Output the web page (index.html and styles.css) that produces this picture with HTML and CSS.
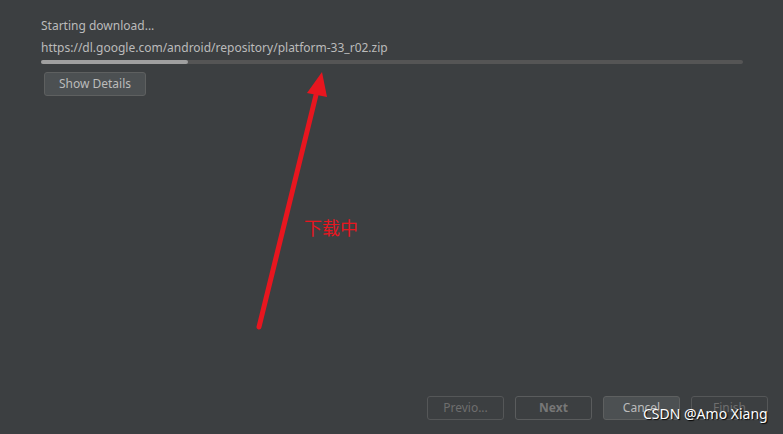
FILE: index.html
```html
<!DOCTYPE html>
<html>
<head>
<meta charset="utf-8">
<link rel="stylesheet" href="styles.css">
</head>
<body>
<div class="window">
  <div class="content">
    <div class="status">Starting download...</div>
    <div class="url">https://dl.google.com/android/repository/platform-33_r02.zip</div>
    <div class="progress"><div class="progress-fill" style="width:21%"></div></div>
    <button class="btn details">Show Details</button>
  </div>
  <div class="footer">
    <button class="btn disabled">Previo...</button>
    <button class="btn bold disabled-bold">Next</button>
    <button class="btn cancel">Cancel</button>
    <button class="btn disabled">Finish</button>
  </div>
  <svg class="arrow" width="783" height="434" viewBox="0 0 783 434">
    <line x1="259" y1="327" x2="316" y2="95" stroke="#e8161f" stroke-width="5" stroke-linecap="round"/>
    <polygon points="322,72 307,93 327,97" fill="#e8161f"/>
  </svg>
  <div class="note">下载中</div>
  <div class="watermark">CSDN @Amo Xiang</div>
</div>
</body>
</html>
```
FILE: styles.css
```css
html, body {
  margin: 0;
  padding: 0;
  background: #3c3f41;
}
.window {
  position: relative;
  width: 783px;
  height: 434px;
  display: flex;
  flex-direction: column;
  font-family: "Noto Sans", "Open Sans", sans-serif;
  font-size: 12px;
  color: #bbbbbb;
  overflow: hidden;
}
.content {
  flex: 1;
  padding: 17px 40px 0 41px;
  display: flex;
  flex-direction: column;
  align-items: flex-start;
}
.status {
  line-height: 18px;
}
.url {
  line-height: 18px;
  margin-top: 4px;
}
.progress {
  align-self: stretch;
  height: 4px;
  margin-top: 3px;
  background: #555555;
  border-radius: 2px;
}
.progress-fill {
  height: 100%;
  background: #a0a0a0;
  border-radius: 2px;
}
.btn {
  font-family: "Noto Sans", "Open Sans", sans-serif;
  font-size: 12px;
  color: #bbbbbb;
  background: #3c3f41;
  border: 1px solid #5e6060;
  border-radius: 3px;
  height: 24px;
  padding: 0;
  line-height: 20px;
}
.details {
  margin-left: 3px;
  margin-top: 8px;
  width: 102px;
  height: 24px;
  background: #4c5052;
}
.footer {
  display: flex;
  justify-content: flex-end;
  gap: 11px;
  padding: 0 15px 14px 0;
}
.footer .btn {
  width: 77px;
}
.disabled {
  color: #6e6e6e;
  border-color: #555758;
}
.disabled-bold {
  color: #777777;
  font-weight: bold;
  border-color: #5a5c5d;
}
.cancel {
  background: #4c5052;
  border-color: #5e6060;
}
.arrow {
  position: absolute;
  left: 0;
  top: 0;
}
.note {
  position: absolute;
  left: 304px;
  top: 215px;
  font-family: "Noto Sans CJK SC", sans-serif;
  font-size: 18px;
  line-height: 24px;
  color: #e8161f;
}
.watermark {
  position: absolute;
  left: 643px;
  top: 405px;
  font-family: "Noto Sans", sans-serif;
  font-size: 14px;
  line-height: 18px;
  color: #ffffff;
  text-shadow: 1px 1px 1px #000000;
}
```
